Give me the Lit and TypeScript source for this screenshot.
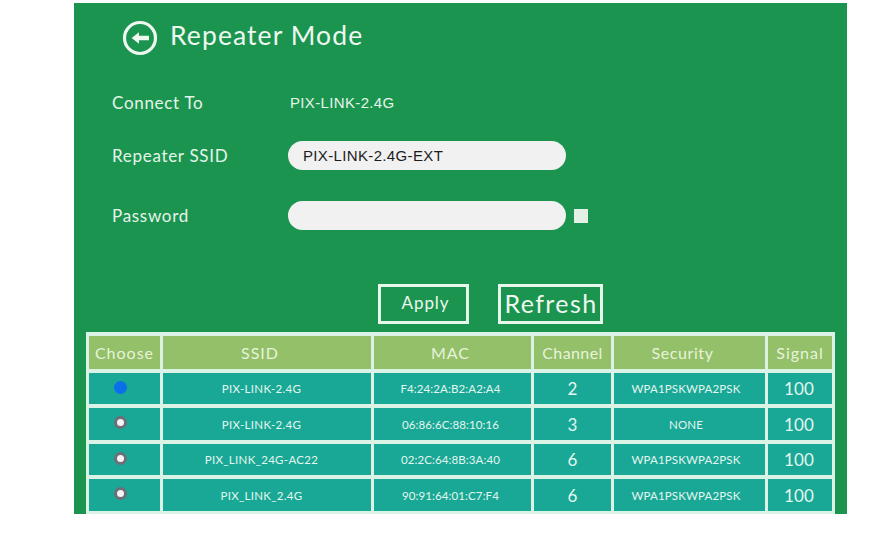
import { LitElement, html, css } from "lit";
import { customElement } from "lit/decorators.js";

const rows = [
  { ssid: "PIX-LINK-2.4G", mac: "F4:24:2A:B2:A2:A4", ch: "2", sec: "WPA1PSKWPA2PSK", on: true },
  { ssid: "PIX-LINK-2.4G", mac: "06:86:6C:88:10:16", ch: "3", sec: "NONE", on: false },
  { ssid: "PIX_LINK_24G-AC22", mac: "02:2C:64:8B:3A:40", ch: "6", sec: "WPA1PSKWPA2PSK", on: false },
  { ssid: "PIX_LINK_2.4G", mac: "90:91:64:01:C7:F4", ch: "6", sec: "WPA1PSKWPA2PSK", on: false },
];

@customElement("app-root")
export class AppRoot extends LitElement {
  static styles = css`
    :host {
      display: block;
      width: 886px;
      height: 536px;
      background: #fff;
      padding: 3px 0 0 74px;
      box-sizing: border-box;
      font-family: Lato, "Open Sans", sans-serif;
      overflow: hidden;
    }
    .panel {
      width: 773px;
      height: 511px;
      background: #1b944f;
      color: #eef8f0;
      display: flex;
      flex-direction: column;
      box-sizing: border-box;
      padding: 17px 12px 0;
    }
    .title {
      display: flex;
      align-items: center;
      gap: 12px;
      margin-left: 36px;
      height: 36px;
      font-size: 26.5px;
      letter-spacing: 1.1px;
      color: #eef8f0;
    }
    .title svg { display: block; }
    .title span { padding-bottom: 6px; }
    .form {
      display: grid;
      grid-template-columns: 176px 278px auto;
      grid-template-rows: 16px 29px 29px;
      row-gap: 31px;
      align-items: center;
      justify-content: start;
      margin: 38px 0 0 26px;
    }
    .label {
      font-size: 17px;
      letter-spacing: 0.7px;
      color: #e6f5ea;
    }
    .plain {
      font-family: "Liberation Sans", Arial, sans-serif;
      font-size: 15px;
      letter-spacing: 0.35px;
      color: #e6f5ea;
      padding-left: 2px;
    }
    .pill {
      height: 29px;
      background: #f1f1f1;
      border-radius: 15px;
      font-family: "Liberation Sans", Arial, sans-serif;
      font-size: 15px;
      letter-spacing: 0.35px;
      color: #1c1c1c;
      display: flex;
      align-items: center;
      padding-left: 15px;
      box-sizing: border-box;
    }
    .check {
      width: 14px;
      height: 14px;
      background: #e4efe6;
      margin-left: 8px;
    }
    .buttons {
      display: flex;
      gap: 29px;
      margin: 54px 0 0 292px;
    }
    .btn {
      height: 40px;
      box-sizing: border-box;
      border: 3px solid #e8f7ec;
      display: flex;
      align-items: center;
      justify-content: center;
      color: #eef8f0;
    }
    .apply { width: 91px; font-size: 17px; letter-spacing: 0.9px; padding: 0 0 4px 4px; }
    .refresh { width: 105px; font-size: 25px; letter-spacing: 1.4px; padding: 0 0 2px 1px; }
    .table {
      display: grid;
      grid-template-columns: 71px 208px 157px 77px 151px 64px;
      grid-template-rows: 33px 31px 32px 31px 32px;
      gap: 4px 3px;
      padding: 4px 3px 3px;
      margin: 8px 0 0;
      width: 749px;
      height: 182px;
      box-sizing: border-box;
      background: #dbf3e6;
    }
    .cell {
      display: flex;
      align-items: center;
      justify-content: center;
      background: #19a896;
      color: #e4f6f0;
      font-size: 11.5px;
      white-space: nowrap;
      overflow: hidden;
    }
    .ssid { letter-spacing: 0.3px; padding-right: 11px; }
    .mac { letter-spacing: 0.1px; padding-right: 4px; }
    .sec { letter-spacing: 0.15px; padding-right: 7px; }
    .head {
      background: #93c069;
      color: #e8f3da;
      font-size: 16px;
      letter-spacing: 1px;
    }
    .head.ssid { padding-right: 14px; }
    .head.sec { padding-right: 14px; letter-spacing: 0.6px; }
    .head.ch { letter-spacing: 0.4px; }
    .big { font-size: 17px; letter-spacing: 0.2px; }
    .big.sig { padding-right: 2px; }
    .radio {
      width: 13px;
      height: 13px;
      border-radius: 50%;
      box-sizing: border-box;
      margin: -3px 0 0 -8px;
      background: #f5f5f5;
      border: 3px solid #6d6f78;
    }
    .radio.on { background: #0a6fe8; border-color: #0a6fe8; }
  `;

  render() {
    return html`
      <div class="panel">
        <div class="title">
          <svg width="36" height="36" viewBox="0 0 36 36" fill="none">
            <circle cx="18" cy="18" r="15.5" stroke="#eef8f0" stroke-width="3.2" />
            <path d="M17 12.2 9.6 18l7.4 5.8V20.2h10v-4.4h-10z" fill="#eef8f0" />
          </svg>
          <span>Repeater Mode</span>
        </div>
        <div class="form">
          <div class="label">Connect To</div>
          <div class="plain">PIX-LINK-2.4G</div>
          <div></div>
          <div class="label">Repeater SSID</div>
          <div class="pill">PIX-LINK-2.4G-EXT</div>
          <div></div>
          <div class="label">Password</div>
          <div class="pill"></div>
          <div class="check"></div>
        </div>
        <div class="buttons">
          <div class="btn apply">Apply</div>
          <div class="btn refresh">Refresh</div>
        </div>
        <div class="table">
          <div class="cell head">Choose</div>
          <div class="cell head ssid">SSID</div>
          <div class="cell head mac">MAC</div>
          <div class="cell head ch">Channel</div>
          <div class="cell head sec">Security</div>
          <div class="cell head">Signal</div>
          ${rows.map(
            (r) => html`
              <div class="cell"><div class="radio ${r.on ? "on" : ""}"></div></div>
              <div class="cell ssid">${r.ssid}</div>
              <div class="cell mac">${r.mac}</div>
              <div class="cell big">${r.ch}</div>
              <div class="cell sec">${r.sec}</div>
              <div class="cell big sig">100</div>
            `
          )}
        </div>
      </div>
    `;
  }
}
